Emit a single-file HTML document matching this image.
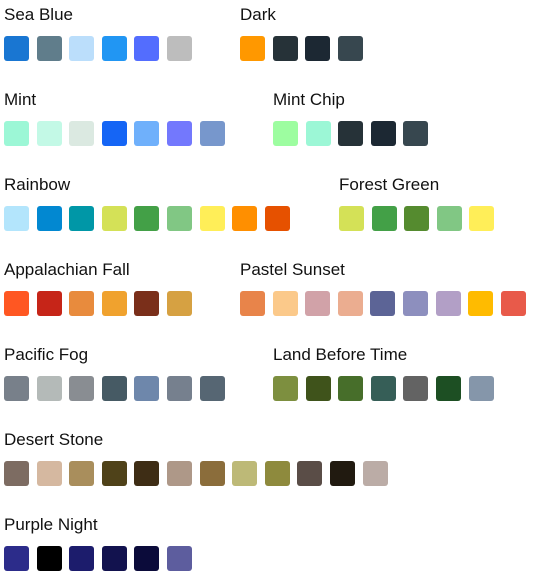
<!DOCTYPE html>
<html><head><style>
body{margin:0;background:#fff;font-family:"Liberation Sans",Arial,sans-serif;width:533px;height:575px;overflow:hidden;position:relative}
.g{position:absolute}
.t{font-size:17px;color:#111;position:absolute;top:5px;left:0;white-space:nowrap}
.s{position:absolute;top:36px;display:flex}
.s i{display:block;width:25px;height:25px;border-radius:3px;margin-right:7.6px}
</style></head><body>
<div class="g" style="left:4px;top:0"><div class="t">Sea Blue</div><div class="s"><i style="background:#1976d2"></i><i style="background:#607d8b"></i><i style="background:#bbdefb"></i><i style="background:#2196f3"></i><i style="background:#536dfe"></i><i style="background:#bdbdbd"></i></div></div>
<div class="g" style="left:240px;top:0"><div class="t">Dark</div><div class="s"><i style="background:#ff9800"></i><i style="background:#263238"></i><i style="background:#1c2833"></i><i style="background:#37474f"></i></div></div>

<div class="g" style="left:4px;top:85px"><div class="t">Mint</div><div class="s"><i style="background:#9cf7d6"></i><i style="background:#c3f9e6"></i><i style="background:#dbe9e1"></i><i style="background:#1565f5"></i><i style="background:#6fb0fb"></i><i style="background:#7378fd"></i><i style="background:#7797cc"></i></div></div>
<div class="g" style="left:273px;top:85px"><div class="t">Mint Chip</div><div class="s"><i style="background:#9dfda0"></i><i style="background:#9cf7d6"></i><i style="background:#263238"></i><i style="background:#1c2833"></i><i style="background:#37474f"></i></div></div>

<div class="g" style="left:4px;top:170px"><div class="t">Rainbow</div><div class="s"><i style="background:#b3e5fc"></i><i style="background:#0288d1"></i><i style="background:#0097a7"></i><i style="background:#d4e157"></i><i style="background:#43a047"></i><i style="background:#81c784"></i><i style="background:#ffee58"></i><i style="background:#ff8f00"></i><i style="background:#e65100"></i></div></div>
<div class="g" style="left:339px;top:170px"><div class="t">Forest Green</div><div class="s"><i style="background:#d4e157"></i><i style="background:#43a047"></i><i style="background:#558b2f"></i><i style="background:#81c784"></i><i style="background:#ffee58"></i></div></div>

<div class="g" style="left:4px;top:255px"><div class="t">Appalachian Fall</div><div class="s"><i style="background:#ff5722"></i><i style="background:#c62518"></i><i style="background:#e88b3d"></i><i style="background:#f0a22e"></i><i style="background:#7a2f1a"></i><i style="background:#d6a142"></i></div></div>
<div class="g" style="left:240px;top:255px"><div class="t">Pastel Sunset</div><div class="s"><i style="background:#e8844a"></i><i style="background:#fbc98a"></i><i style="background:#d1a2a8"></i><i style="background:#ebad90"></i><i style="background:#5c6496"></i><i style="background:#8d8fbe"></i><i style="background:#b29fc6"></i><i style="background:#ffbb00"></i><i style="background:#e85a4a"></i></div></div>

<div class="g" style="left:4px;top:340px"><div class="t">Pacific Fog</div><div class="s"><i style="background:#78808a"></i><i style="background:#b4bab8"></i><i style="background:#898d92"></i><i style="background:#465a64"></i><i style="background:#6e87ab"></i><i style="background:#76808e"></i><i style="background:#566673"></i></div></div>
<div class="g" style="left:273px;top:340px"><div class="t">Land Before Time</div><div class="s"><i style="background:#7d8f3f"></i><i style="background:#3f531b"></i><i style="background:#476e2a"></i><i style="background:#365e57"></i><i style="background:#636363"></i><i style="background:#1d4f23"></i><i style="background:#8596aa"></i></div></div>

<div class="g" style="left:4px;top:425px"><div class="t">Desert Stone</div><div class="s"><i style="background:#7d6c62"></i><i style="background:#d5b8a0"></i><i style="background:#a98e5c"></i><i style="background:#4f4219"></i><i style="background:#3e2d15"></i><i style="background:#ae9888"></i><i style="background:#8b6d3b"></i><i style="background:#bdb977"></i><i style="background:#8e8a3d"></i><i style="background:#5a4d47"></i><i style="background:#211a10"></i><i style="background:#bbaca6"></i></div></div>

<div class="g" style="left:4px;top:510px"><div class="t">Purple Night</div><div class="s"><i style="background:#2c2c8a"></i><i style="background:#000"></i><i style="background:#1c1c6c"></i><i style="background:#12124e"></i><i style="background:#0b0b3a"></i><i style="background:#5d5d9e"></i></div></div>
</body></html>
